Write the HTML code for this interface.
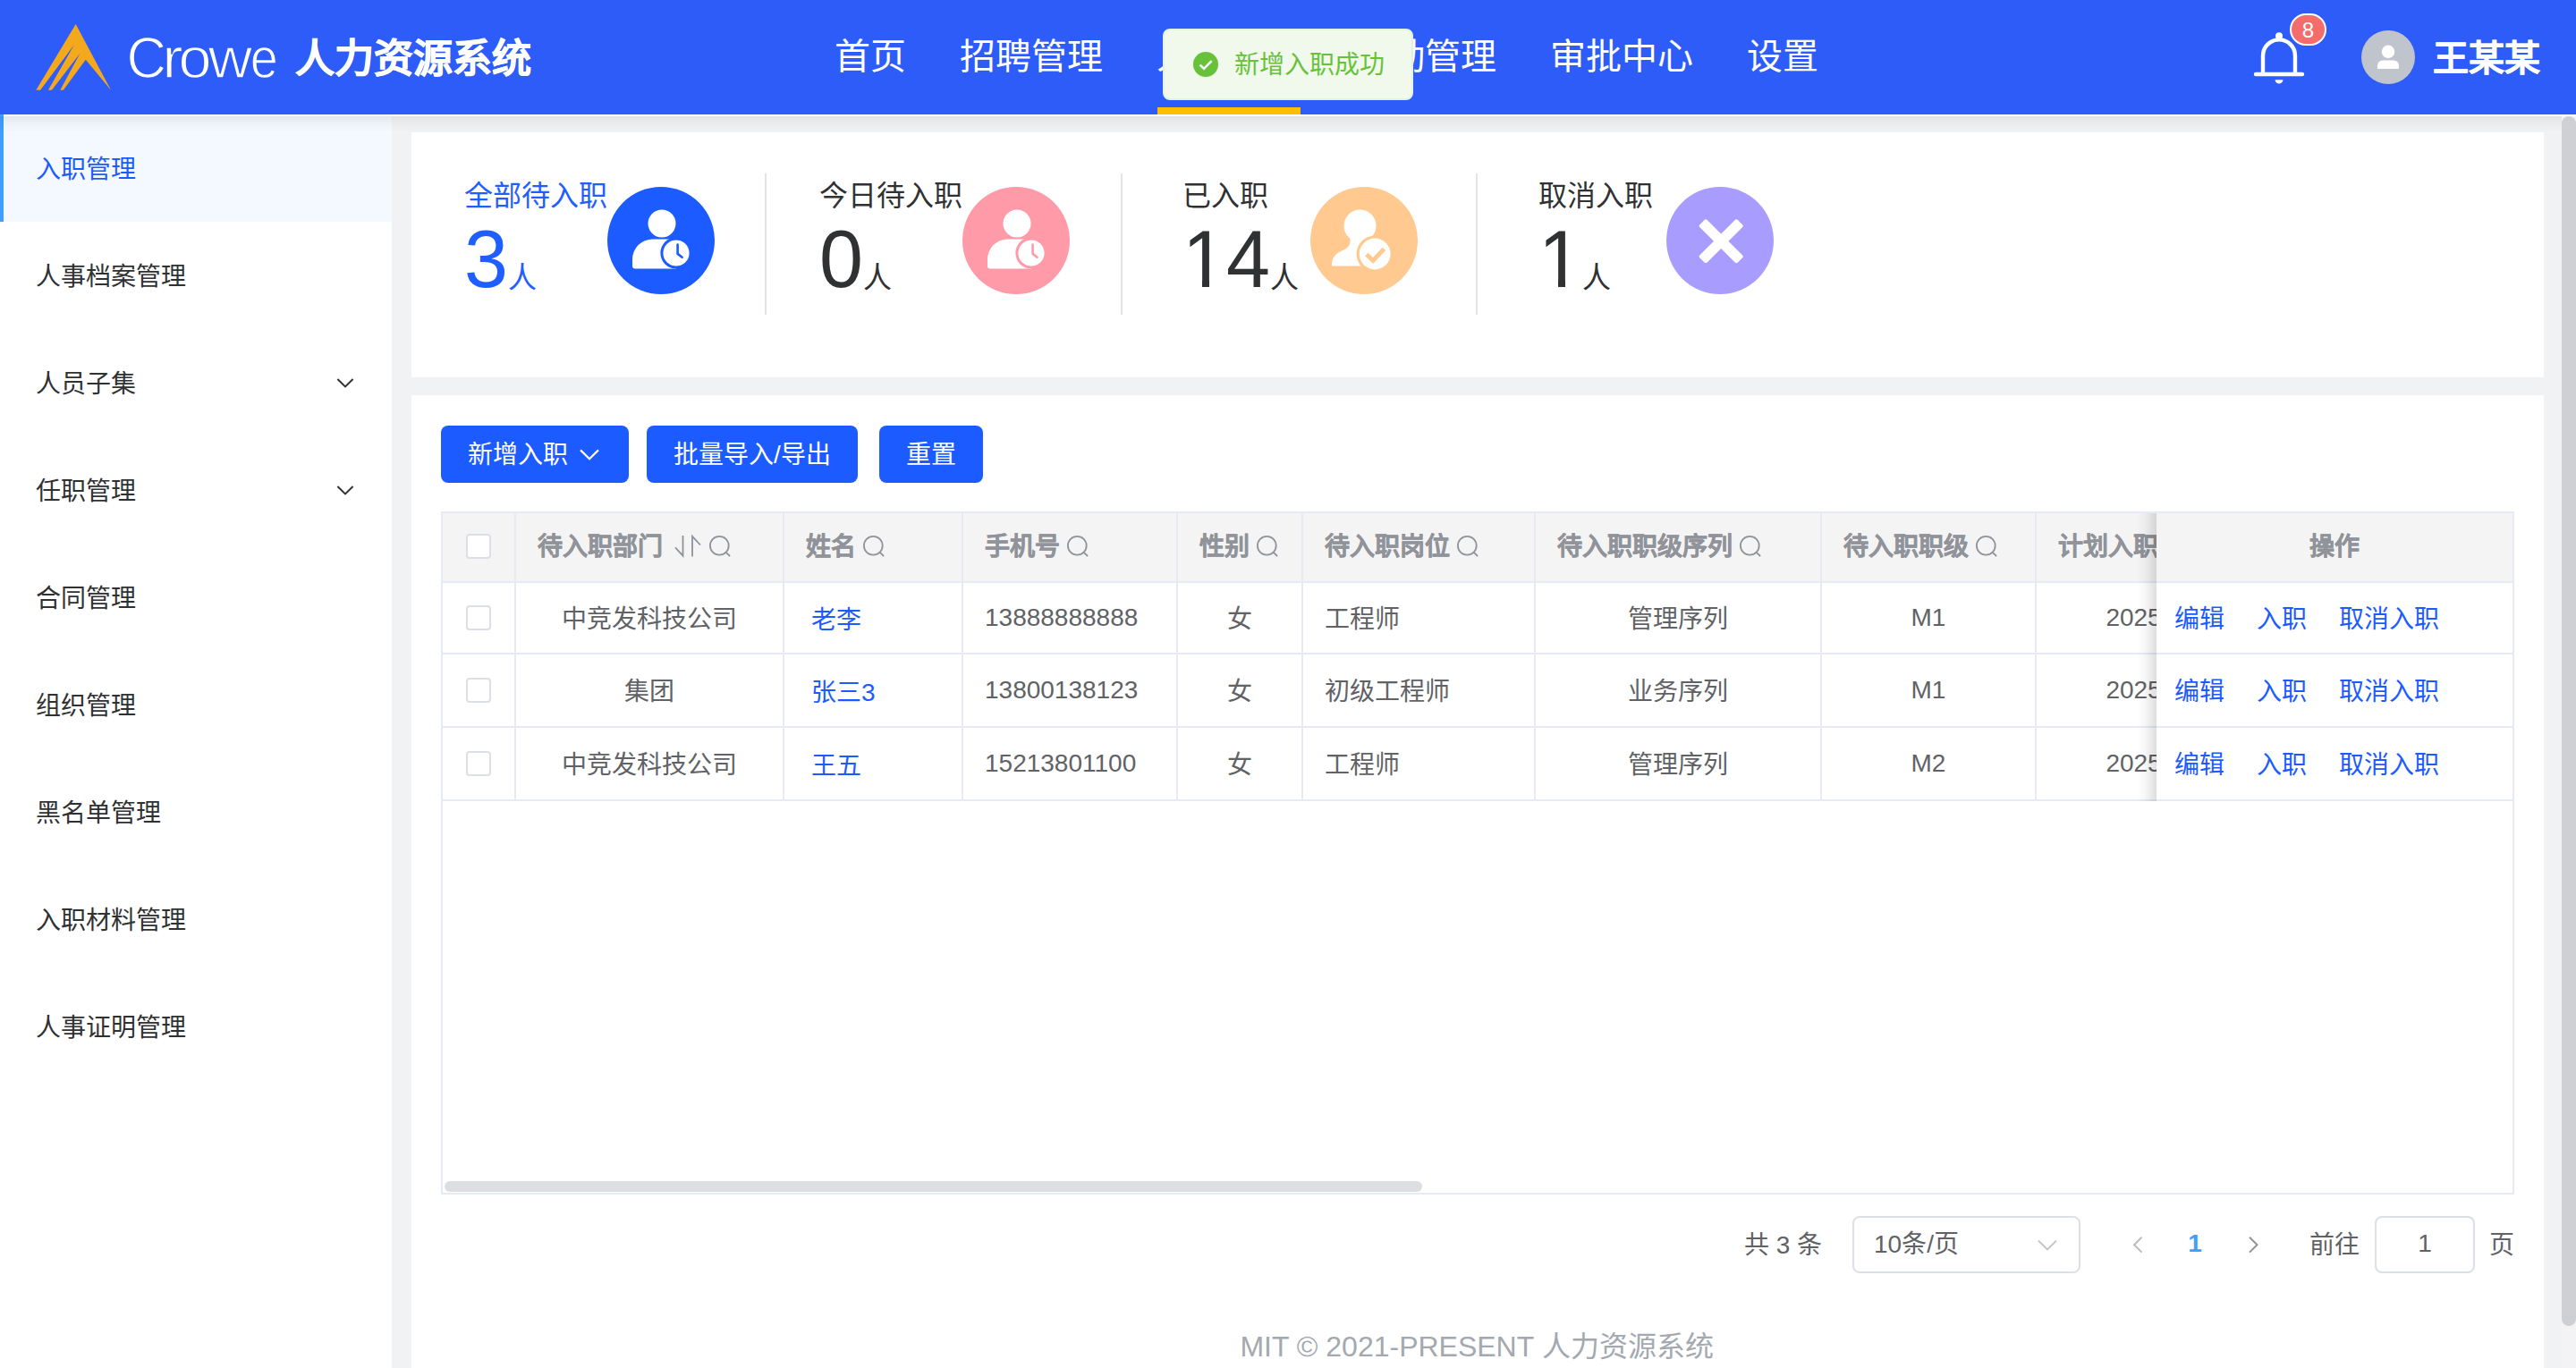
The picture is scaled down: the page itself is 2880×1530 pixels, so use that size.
<!DOCTYPE html>
<html lang="zh-CN">
<head>
<meta charset="utf-8">
<title>人力资源系统</title>
<style>
*{box-sizing:border-box;margin:0;padding:0}
html,body{width:2880px;height:1530px;overflow:hidden;background:#f1f2f4;font-family:"Liberation Sans",sans-serif;color:#303133}
body{position:relative}
.a{position:absolute}
.t{position:absolute;white-space:nowrap;line-height:40px;height:40px;font-size:28px}
svg{position:absolute;overflow:visible}
/* header */
#hd{left:0;top:0;width:2880px;height:128px;background:#2e5cf8}
#hdline{left:0;top:128px;width:2880px;height:2px;background:#fafbfc}
#hdshadow{left:0;top:130px;width:2880px;height:18px;background:linear-gradient(to bottom,rgba(0,0,0,.07),rgba(0,0,0,.028) 45%,rgba(0,0,0,0))}
.nav{position:absolute;top:39px;height:48px;line-height:48px;font-size:40px;color:#fff;white-space:nowrap}
#title{left:330px;top:40px;height:52px;line-height:52px;font-size:44px;font-weight:bold;color:#fff;-webkit-text-stroke:.7px #fff}
#uname{left:2720px;top:41px;height:48px;line-height:48px;font-size:40px;font-weight:bold;color:#fff;-webkit-text-stroke:.5px #fff}
/* sidebar */
#sb{left:0;top:130px;width:438px;height:1400px;background:#fff}
#sbact{left:0;top:128px;width:438px;height:120px;background:#f4f8ff;border-left:4px solid #409eff}
.mi{left:40px;color:#303133}
/* cards */
#c1{left:460px;top:148px;width:2384px;height:274px;background:#fff}
#c2{left:460px;top:442px;width:2384px;height:1088px;background:#fff}
.lbl{font-size:32px;line-height:44px;height:44px;color:#303133}
.num{font-size:88px;line-height:100px;height:100px;color:#303133;transform:scaleY(1.04);transform-origin:0 80.5px}
.num span{font-size:32px;position:relative;top:1px}
.blue{color:#1f5eff}
.dv{width:2px;height:158px;top:194px;background:#e4e4e6}
.ic{width:120px;height:120px;border-radius:60px;top:209px}
/* buttons */
.btn{top:476px;height:64px;border-radius:8px;background:#1c5bff;color:#fff;font-size:28px;line-height:66px;white-space:nowrap;padding-left:30px;overflow:hidden}

/* table */
#tb{left:493px;top:572px;width:2318px;height:764px;border:2px solid #e6eaf4;background:#fff}
#th{left:495px;top:574px;width:2314px;height:76px;background:#f4f4f4}
.hl{left:495px;width:2314px;height:2px;background:#e6eaf4}
.vl{top:574px;width:2px;height:322px;background:#e6eaf4}
.hc{top:592px;font-weight:bold;color:#909399;-webkit-text-stroke:.35px #909399}
.bc{color:#606266}
.ctr{text-align:center}
.lk{color:#1c5bff}
.cb{left:521px;width:28px;height:28px;border:2px solid #dcdfe6;border-radius:4px;background:#fff}
#fxsh{left:2389px;top:574px;width:22px;height:322px;background:linear-gradient(to right,rgba(0,0,0,0),rgba(0,0,0,.03) 40%,rgba(0,0,0,.13))}
#fx{left:2411px;top:574px;width:398px;height:322px;background:#fff}
#fxh{left:2411px;top:574px;width:398px;height:76px;background:#f4f4f4}
#hsb{left:497px;top:1321px;width:1093px;height:12px;border-radius:6px;background:#dddee1}

/* pager */
.pg{color:#606266}
.ipt{top:1360px;height:64px;border:2px solid #dcdfe6;border-radius:8px;background:#fff}
#ft{left:459px;width:2384px;top:1486px;text-align:center;font-size:32px;color:#a3a9b0}
#badge{left:2560px;top:15px;width:41px;height:36px;border:2px solid #fff;border-radius:18px;background:#f56c6c;color:#fff;font-size:24px;line-height:33px;text-align:center}
#av{left:2640px;top:34px;width:60px;height:60px;border-radius:30px;background:#c0c4cc}
#toast{left:1300px;top:32px;width:280px;height:80px;border:2px solid #e1f3d8;border-radius:8px;background:#f0f9eb}
#vsb{left:2864px;top:130px;width:16px;height:1400px;background:#f3f3f5}
#vth{left:2864px;top:130px;width:16px;height:1353px;border-radius:8px;background:#cfd0d3}
</style>
</head>
<body>
<!-- HEADER -->
<div class="a" id="hd"></div>
<div class="a" id="hdline"></div>
<svg class="a" style="left:0;top:0" width="330" height="128" viewBox="0 0 330 128">
<polygon fill="#f4a81c" points="84.7,27 40.3,100.8 45.1,100.8 83,50 53.9,100.8 57.9,100.8 89.4,59.8 67.3,100.8 70.8,100.8 95.8,66.8 124,100.8"/>
<g font-family="Liberation Sans, sans-serif" font-size="64.5" fill="#fff" stroke="#2e5cf8" stroke-width="1.3"><text transform="translate(141.5 87.2) scale(.955 1)">C</text><text transform="translate(181.3 87.2) scale(1.086 1)">r</text><text transform="translate(199.6 87.2) scale(1.031 1)">o</text><text transform="translate(232.7 87.2) scale(1.057 1)">w</text><text transform="translate(279.7 87.2) scale(.866 1)">e</text></g>
</svg>
<div class="t" id="title">人力资源系统</div>
<div class="nav" style="left:933px">首页</div>
<div class="nav" style="left:1073px">招聘管理</div>
<div class="nav" style="left:1293px">人事管理</div>
<div class="nav" style="left:1513px">考勤管理</div>
<div class="nav" style="left:1733px">审批中心</div>
<div class="nav" style="left:1953px">设置</div>
<div class="a" style="left:1294px;top:120px;width:160px;height:8px;background:#fdbe00"></div>
<div class="t" id="uname">王某某</div>

<!-- SIDEBAR -->
<div class="a" id="sb"></div>
<div class="a" id="sbact"></div>
<div class="t mi" style="top:170px;color:#1c5bff">入职管理</div>
<div class="t mi" style="top:290px">人事档案管理</div>
<div class="t mi" style="top:410px">人员子集</div>
<div class="t mi" style="top:530px">任职管理</div>
<div class="t mi" style="top:650px">合同管理</div>
<div class="t mi" style="top:770px">组织管理</div>
<div class="t mi" style="top:890px">黑名单管理</div>
<div class="t mi" style="top:1010px">入职材料管理</div>
<div class="t mi" style="top:1130px">人事证明管理</div>

<!-- CARDS -->
<div class="a" id="c1"></div>
<div class="a" id="c2"></div>
<div class="a" id="hdshadow"></div>

<!-- STATS -->
<div class="t lbl blue" style="left:519px;top:197px">全部待入职</div>
<div class="t num blue" style="left:519px;top:241px">3<span>人</span></div>
<div class="a ic" style="left:679px;background:#1c5bff"></div>
<div class="a dv" style="left:855px"></div>
<div class="t lbl" style="left:916px;top:197px">今日待入职</div>
<div class="t num" style="left:916px;top:241px">0<span>人</span></div>
<div class="a ic" style="left:1076px;background:#ff9aa9"></div>
<div class="a dv" style="left:1253px"></div>
<div class="t lbl" style="left:1322px;top:197px">已入职</div>
<div class="t num" style="left:1322px;top:241px">14<span>人</span></div>
<div class="a ic" style="left:1465px;background:#ffc98f"></div>
<div class="a dv" style="left:1650px"></div>
<div class="t lbl" style="left:1720px;top:197px">取消入职</div>
<div class="t num" style="left:1720px;top:241px">1<span>人</span></div>
<div class="a ic" style="left:1863px;background:#a89dff"></div>

<div class="a" style="left:1726px;top:312px;width:16px;height:13px;background:#fff"></div>
<div class="a" style="left:1750px;top:312px;width:17px;height:13px;background:#fff"></div>
<div class="a" style="left:1328px;top:312px;width:16px;height:13px;background:#fff"></div>
<div class="a" style="left:1352px;top:312px;width:17px;height:13px;background:#fff"></div>
<!-- TOOLBAR -->
<div class="a btn" style="left:493px;width:210px">新增入职</div>
<div class="a btn" style="left:723px;width:236px">批量导入/导出</div>
<div class="a btn" style="left:983px;width:116px">重置</div>

<div class="a" id="tb"></div>
<div class="a" id="th"></div>
<div class="a hl" style="top:650px"></div>
<div class="a hl" style="top:730px"></div>
<div class="a hl" style="top:812px"></div>
<div class="a hl" style="top:894px"></div>
<div class="a vl" style="left:575px"></div>
<div class="a vl" style="left:875px"></div>
<div class="a vl" style="left:1075px"></div>
<div class="a vl" style="left:1315px"></div>
<div class="a vl" style="left:1455px"></div>
<div class="a vl" style="left:1715px"></div>
<div class="a vl" style="left:2035px"></div>
<div class="a vl" style="left:2275px"></div>
<div class="t hc" style="left:601px">待入职部门</div>
<svg style="left:751px;top:597px" width="36" height="28" viewBox="0 0 36 28"><path d="M12.5 2v22.6l-8.5-9.3M23 25.5V2.8l9 9.7" fill="none" stroke="#909399" stroke-width="1.8" stroke-linejoin="miter"/></svg>
<svg style="left:792px;top:597px" width="28" height="28" viewBox="0 0 28 28"><circle cx="12.3" cy="13.2" r="10.4" fill="none" stroke="#909399" stroke-width="1.8"/><path d="M19.5 20.6l4.6 4.4" stroke="#909399" stroke-width="1.8" fill="none"/></svg>
<div class="t hc" style="left:901px">姓名</div>
<svg style="left:964px;top:597px" width="28" height="28" viewBox="0 0 28 28"><circle cx="12.3" cy="13.2" r="10.4" fill="none" stroke="#909399" stroke-width="1.8"/><path d="M19.5 20.6l4.6 4.4" stroke="#909399" stroke-width="1.8" fill="none"/></svg>
<div class="t hc" style="left:1101px">手机号</div>
<svg style="left:1192px;top:597px" width="28" height="28" viewBox="0 0 28 28"><circle cx="12.3" cy="13.2" r="10.4" fill="none" stroke="#909399" stroke-width="1.8"/><path d="M19.5 20.6l4.6 4.4" stroke="#909399" stroke-width="1.8" fill="none"/></svg>
<div class="t hc" style="left:1341px">性别</div>
<svg style="left:1404px;top:597px" width="28" height="28" viewBox="0 0 28 28"><circle cx="12.3" cy="13.2" r="10.4" fill="none" stroke="#909399" stroke-width="1.8"/><path d="M19.5 20.6l4.6 4.4" stroke="#909399" stroke-width="1.8" fill="none"/></svg>
<div class="t hc" style="left:1481px">待入职岗位</div>
<svg style="left:1628px;top:597px" width="28" height="28" viewBox="0 0 28 28"><circle cx="12.3" cy="13.2" r="10.4" fill="none" stroke="#909399" stroke-width="1.8"/><path d="M19.5 20.6l4.6 4.4" stroke="#909399" stroke-width="1.8" fill="none"/></svg>
<div class="t hc" style="left:1741px">待入职职级序列</div>
<svg style="left:1944px;top:597px" width="28" height="28" viewBox="0 0 28 28"><circle cx="12.3" cy="13.2" r="10.4" fill="none" stroke="#909399" stroke-width="1.8"/><path d="M19.5 20.6l4.6 4.4" stroke="#909399" stroke-width="1.8" fill="none"/></svg>
<div class="t hc" style="left:2061px">待入职职级</div>
<svg style="left:2208px;top:597px" width="28" height="28" viewBox="0 0 28 28"><circle cx="12.3" cy="13.2" r="10.4" fill="none" stroke="#909399" stroke-width="1.8"/><path d="M19.5 20.6l4.6 4.4" stroke="#909399" stroke-width="1.8" fill="none"/></svg>
<div class="t hc" style="left:2301px">计划入职日期</div>
<div class="a cb" style="top:597px"></div>
<div class="a cb" style="top:677px"></div>
<div class="a cb" style="top:758px"></div>
<div class="a cb" style="top:840px"></div>
<div class="t bc ctr" style="left:577px;width:298px;top:673px">中竞发科技公司</div>
<div class="t bc lk" style="left:907px;top:674px">老李</div>
<div class="t bc" style="left:1101px;top:671px">13888888888</div>
<div class="t bc ctr" style="left:1317px;width:138px;top:673px">女</div>
<div class="t bc" style="left:1481px;top:673px">工程师</div>
<div class="t bc ctr" style="left:1717px;width:318px;top:673px">管理序列</div>
<div class="t bc ctr" style="left:2037px;width:238px;top:671px">M1</div>
<div class="t bc ctr" style="left:2277px;width:298px;top:671px">2025-07-01</div>
<div class="t bc ctr" style="left:577px;width:298px;top:754px">集团</div>
<div class="t bc lk" style="left:907px;top:755px">张三3</div>
<div class="t bc" style="left:1101px;top:752px">13800138123</div>
<div class="t bc ctr" style="left:1317px;width:138px;top:754px">女</div>
<div class="t bc" style="left:1481px;top:754px">初级工程师</div>
<div class="t bc ctr" style="left:1717px;width:318px;top:754px">业务序列</div>
<div class="t bc ctr" style="left:2037px;width:238px;top:752px">M1</div>
<div class="t bc ctr" style="left:2277px;width:298px;top:752px">2025-07-01</div>
<div class="t bc ctr" style="left:577px;width:298px;top:836px">中竞发科技公司</div>
<div class="t bc lk" style="left:907px;top:837px">王五</div>
<div class="t bc" style="left:1101px;top:834px">15213801100</div>
<div class="t bc ctr" style="left:1317px;width:138px;top:836px">女</div>
<div class="t bc" style="left:1481px;top:836px">工程师</div>
<div class="t bc ctr" style="left:1717px;width:318px;top:836px">管理序列</div>
<div class="t bc ctr" style="left:2037px;width:238px;top:834px">M2</div>
<div class="t bc ctr" style="left:2277px;width:298px;top:834px">2025-07-01</div>
<div class="a" id="fxsh"></div>
<div class="a" id="fx"></div>
<div class="a" id="fxh"></div>
<div class="a hl" style="top:650px;left:2411px;width:398px"></div>
<div class="a hl" style="top:730px;left:2411px;width:398px"></div>
<div class="a hl" style="top:812px;left:2411px;width:398px"></div>
<div class="a hl" style="top:894px;left:2411px;width:398px"></div>
<div class="t hc ctr" style="left:2411px;width:398px">操作</div>
<div class="t bc lk" style="left:2431px;top:673px">编辑</div>
<div class="t bc lk" style="left:2523px;top:673px">入职</div>
<div class="t bc lk" style="left:2615px;top:673px">取消入职</div>
<div class="t bc lk" style="left:2431px;top:754px">编辑</div>
<div class="t bc lk" style="left:2523px;top:754px">入职</div>
<div class="t bc lk" style="left:2615px;top:754px">取消入职</div>
<div class="t bc lk" style="left:2431px;top:836px">编辑</div>
<div class="t bc lk" style="left:2523px;top:836px">入职</div>
<div class="t bc lk" style="left:2615px;top:836px">取消入职</div>
<div class="a" id="hsb"></div>
<div class="t pg" style="left:1950px;top:1373px">共 3 条</div>
<div class="a ipt" style="left:2071px;width:255px"></div>
<div class="t pg" style="left:2095px;top:1372px">10条/页</div>
<svg style="left:2276px;top:1380px" width="26" height="24" viewBox="0 0 26 24"><path d="M3 7.6l10 9.8l10-9.8" fill="none" stroke="#c0c4cc" stroke-width="2"/></svg>
<svg style="left:2380px;top:1380px" width="20" height="24" viewBox="0 0 20 24"><path d="M14.5 3.8L6 12.2l8.5 8.4" fill="none" stroke="#b9bcc3" stroke-width="2"/></svg>
<div class="t pg" style="left:2424px;width:60px;top:1371px;text-align:center;color:#409eff;font-weight:bold">1</div>
<svg style="left:2509px;top:1380px" width="20" height="24" viewBox="0 0 20 24"><path d="M6 3.8l8.5 8.4L6 20.6" fill="none" stroke="#909399" stroke-width="2"/></svg>
<div class="t pg" style="left:2582px;top:1373px">前往</div>
<div class="a ipt" style="left:2655px;width:112px"></div>
<div class="t pg" style="left:2655px;width:112px;top:1371px;text-align:center">1</div>
<div class="t pg" style="left:2783px;top:1373px">页</div>
<div class="t" id="ft">MIT © 2021-PRESENT 人力资源系统</div>
<!-- sidebar chevrons -->
<svg style="left:374px;top:416px" width="24" height="24" viewBox="0 0 24 24"><path d="M3.4 8l8.6 8.4L20.6 8" fill="none" stroke="#303133" stroke-width="2"/></svg>
<svg style="left:374px;top:536px" width="24" height="24" viewBox="0 0 24 24"><path d="M3.4 8l8.6 8.4L20.6 8" fill="none" stroke="#303133" stroke-width="2"/></svg>
<!-- button chevron -->
<svg style="left:645px;top:494px" width="28" height="28" viewBox="0 0 28 28"><path d="M4 9.4l10 9.8l10-9.8" fill="none" stroke="#fff" stroke-width="2.2"/></svg>
<!-- bell -->
<svg style="left:2516px;top:32px" width="64" height="66" viewBox="0 0 64 66">
<path d="M14 50V30.4a18 18 0 0 1 36 0V50" fill="none" stroke="#fff" stroke-width="4.4"/>
<path d="M6 51h52" fill="none" stroke="#fff" stroke-width="4.4" stroke-linecap="round"/>
<circle cx="32" cy="8.2" r="4" fill="#fff"/>
<path d="M27.6 57.2h8.8a4.4 4.4 0 0 1-8.8 0z" fill="#fff"/>
</svg>
<div class="a" id="badge">8</div>
<!-- avatar -->
<div class="a" id="av"></div>
<svg style="left:2640px;top:34px" width="60" height="60" viewBox="0 0 60 60"><circle cx="30" cy="23.8" r="7.2" fill="#fff"/><path d="M18 43v-3.6a6 6 0 0 1 6-6h12a6 6 0 0 1 6 6V43z" fill="#fff"/></svg>
<!-- stat icons -->
<svg style="left:679px;top:209px" width="120" height="120" viewBox="0 0 120 120">
<circle cx="61" cy="41" r="15.5" fill="#fff"/>
<path d="M31 91.5a3 3 0 0 1-3-3V81a22.5 22.5 0 0 1 22.5-22.5H77v33z" fill="#fff"/>
<circle cx="77" cy="74" r="17.6" fill="#1c5bff"/><circle cx="77" cy="74" r="14.6" fill="#fff"/>
<path d="M78.6 64.5v10.4l5 3.8" fill="none" stroke="#1c5bff" stroke-width="2.6" stroke-linecap="round" stroke-linejoin="round"/>
</svg>
<svg style="left:1076px;top:209px" width="120" height="120" viewBox="0 0 120 120">
<circle cx="61" cy="41" r="15.5" fill="#fff"/>
<path d="M31 91.5a3 3 0 0 1-3-3V81a22.5 22.5 0 0 1 22.5-22.5H77v33z" fill="#fff"/>
<circle cx="77" cy="74" r="17.6" fill="#ff9aa9"/><circle cx="77" cy="74" r="14.6" fill="#fff"/>
<path d="M78.6 64.5v10.4l5 3.8" fill="none" stroke="#ff9aa9" stroke-width="2.6" stroke-linecap="round" stroke-linejoin="round"/>
</svg>
<svg style="left:1465px;top:209px" width="120" height="120" viewBox="0 0 120 120">
<circle cx="55.5" cy="43.5" r="18" fill="#fff"/>
<path d="M44 56c2 8-1 12-8 15c-9 4-12 9-12 16v1.5h49v-30z" fill="#fff"/>
<circle cx="72.2" cy="75" r="20.6" fill="#ffc98f"/><circle cx="72.2" cy="75" r="17.4" fill="#fff"/>
<path d="M62.8 75.5l7.2 7l12.4-13.2" fill="none" stroke="#ffc98f" stroke-width="4.8"/>
</svg>
<svg style="left:1863px;top:209px" width="120" height="120" viewBox="0 0 120 120">
<g transform="translate(61.2 60.8)" fill="#fff"><rect x="-30" y="-5.8" width="60" height="11.6" rx="2.2" transform="rotate(45)"/><rect x="-30" y="-5.8" width="60" height="11.6" rx="2.2" transform="rotate(-45)"/></g>
</svg>
<!-- toast -->
<div class="a" id="toast"></div>
<svg style="left:1334px;top:58px" width="28" height="28" viewBox="0 0 28 28"><circle cx="14" cy="14" r="14" fill="#67c23a"/><path d="M7.6 14.6l4.4 4.2l8.6-8.6" fill="none" stroke="#fff" stroke-width="2.6"/></svg>
<div class="t" style="left:1380px;top:53px;color:#67c23a">新增入职成功</div>
<!-- page scrollbar -->
<div class="a" id="vsb"></div>
<div class="a" id="vth"></div>
</body>
</html>
